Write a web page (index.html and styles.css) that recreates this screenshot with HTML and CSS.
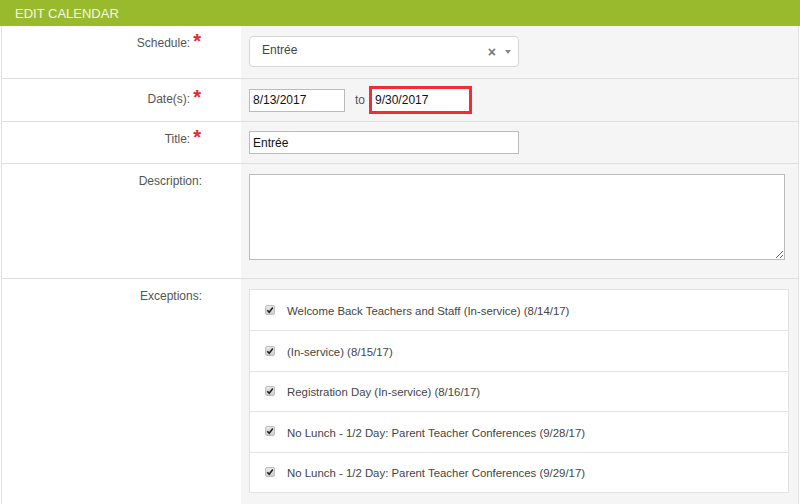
FILE: index.html
```html
<!DOCTYPE html>
<html>
<head>
<meta charset="utf-8">
<link rel="stylesheet" href="styles.css">
</head>
<body>
<div class="panel">
  <div class="panel-head">EDIT CALENDAR</div>
  <div class="form">
    <div class="row">
      <div class="label">Schedule:<span class="req">*</span></div>
      <div class="field f-schedule">
        <div class="select">
          <span class="sel-text">Entrée</span>
          <span class="sel-clear">×</span>
          <span class="sel-arrow"></span>
        </div>
      </div>
    </div>
    <div class="row">
      <div class="label l-dates">Date(s):<span class="req">*</span></div>
      <div class="field f-dates">
        <input class="inp date" type="text" value="8/13/2017">
        <span class="to">to</span>
        <input class="inp date error" type="text" value="9/30/2017">
      </div>
    </div>
    <div class="row">
      <div class="label">Title:<span class="req">*</span></div>
      <div class="field">
        <input class="inp title" type="text" value="Entrée">
      </div>
    </div>
    <div class="row">
      <div class="label">Description:</div>
      <div class="field f-desc">
        <textarea class="desc"></textarea>
      </div>
    </div>
    <div class="row">
      <div class="label">Exceptions:</div>
      <div class="field f-exc">
        <ul class="exc">
          <li><span class="cb"><svg viewBox="0 0 10 10" width="10" height="10"><path d="M2.3 5.2 L4.2 7.2 L7.8 2.6" fill="none" stroke="#222" stroke-width="1.6"/></svg></span>Welcome Back Teachers and Staff (In-service) (8/14/17)</li>
          <li><span class="cb"><svg viewBox="0 0 10 10" width="10" height="10"><path d="M2.3 5.2 L4.2 7.2 L7.8 2.6" fill="none" stroke="#222" stroke-width="1.6"/></svg></span>(In-service) (8/15/17)</li>
          <li><span class="cb"><svg viewBox="0 0 10 10" width="10" height="10"><path d="M2.3 5.2 L4.2 7.2 L7.8 2.6" fill="none" stroke="#222" stroke-width="1.6"/></svg></span>Registration Day (In-service) (8/16/17)</li>
          <li><span class="cb"><svg viewBox="0 0 10 10" width="10" height="10"><path d="M2.3 5.2 L4.2 7.2 L7.8 2.6" fill="none" stroke="#222" stroke-width="1.6"/></svg></span>No Lunch - 1/2 Day: Parent Teacher Conferences (9/28/17)</li>
          <li><span class="cb"><svg viewBox="0 0 10 10" width="10" height="10"><path d="M2.3 5.2 L4.2 7.2 L7.8 2.6" fill="none" stroke="#222" stroke-width="1.6"/></svg></span>No Lunch - 1/2 Day: Parent Teacher Conferences (9/29/17)</li>
        </ul>
      </div>
    </div>
  </div>
</div>
</body>
</html>
```
FILE: styles.css
```css
html, body {
  margin: 0;
  padding: 0;
  background: #fff;
  font-family: "Liberation Sans", Arial, sans-serif;
  font-size: 12px;
  color: #555;
}
.panel {
  width: 800px;
}
.panel-head {
  height: 26px;
  line-height: 27px;
  background: #9aba2e;
  color: #f2f7e4;
  font-size: 13px;
  padding-left: 15px;
}
.form {
  margin: 0 1px 0 1px;
  border-left: 1px solid #e2e2e2;
  border-right: 1px solid #e2e2e2;
}
.row {
  display: flex;
  border-bottom: 1px solid #dedede;
}
.label {
  width: 239px;
  flex: none;
  background: #fff;
  text-align: right;
  padding: 10px 39px 0 0;
  box-sizing: border-box;
  line-height: 14px;
}
.l-dates {
  padding-top: 13px;
}
.req {
  display: inline-block;
  color: #e8262b;
  font-size: 20px;
  font-weight: bold;
  position: relative;
  top: 0px;
  margin-left: 3px;
  margin-right: 1px;
  line-height: 10px;
  vertical-align: top;
}
.field {
  flex: 1;
  background: #f5f5f5;
  padding: 9px 0 9px 8px;
}
.f-schedule {
  padding-top: 10px;
  padding-bottom: 11px;
}
.select {
  width: 270px;
  height: 31px;
  box-sizing: border-box;
  background: #fff;
  border: 1px solid #d6d6d6;
  border-radius: 4px;
  display: flex;
  align-items: center;
  padding-left: 12px;
  padding-bottom: 3px;
  color: #444;
}
.sel-text {
  flex: 1;
}
.sel-clear {
  color: #777;
  font-size: 14px;
  font-weight: bold;
  margin-right: 9px;
  margin-top: 4px;
}
.sel-arrow {
  width: 0;
  height: 0;
  border-left: 3px solid transparent;
  border-right: 3px solid transparent;
  border-top: 4px solid #888;
  margin-right: 7px;
  margin-top: 3px;
}
.inp {
  font-family: "Liberation Sans", Arial, sans-serif;
  font-size: 12px;
  color: #111;
  height: 23px;
  box-sizing: border-box;
  border: 1px solid #bbb;
  background: #fff;
  padding: 0 3px;
  margin: 0;
  outline: none;
}
.f-dates {
  display: flex;
  align-items: center;
  padding-top: 7px;
  padding-bottom: 7px;
}
.date {
  width: 96px;
}
.to {
  margin: 0 4px 0 10px;
  color: #555;
}
.date.error {
  width: 103px;
  height: 28px;
  border: 3px solid #ee2f36;
}
.title {
  width: 270px;
  display: block;
}
.desc {
  display: block;
  width: 536px;
  height: 86px;
  box-sizing: border-box;
  border: 1px solid #bbb;
  margin: 0;
  resize: both;
  font-family: "Liberation Sans", Arial, sans-serif;
}
.f-desc {
  padding-top: 10px;
  padding-bottom: 18px;
}
.f-exc {
  padding-top: 10px;
  padding-bottom: 12px;
}
.exc {
  list-style: none;
  margin: 0;
  padding: 0;
  width: 538px;
  border: 1px solid #e2e2e2;
  background: #fff;
}
.exc li {
  height: 40.4px;
  box-sizing: border-box;
  display: flex;
  align-items: center;
  padding-left: 15px;
  padding-top: 2px;
  border-top: 1px solid #e4e4e4;
  color: #444;
  font-size: 11.4px;
}
.exc li:first-child {
  border-top: none;
}
.cb {
  width: 10px;
  height: 10px;
  border-radius: 2px;
  background: linear-gradient(#e8e8e8, #cfcfcf);
  border: 1px solid #bdbdbd;
  box-sizing: border-box;
  display: inline-flex;
  align-items: center;
  justify-content: center;
  margin-right: 12px;
  margin-top: -3px;
}
.cb svg {
  display: block;
  flex: none;
}
```
